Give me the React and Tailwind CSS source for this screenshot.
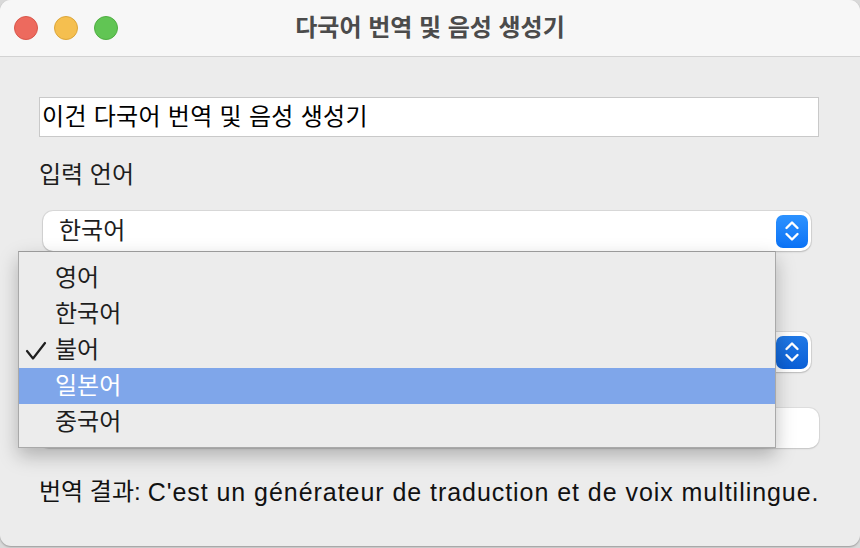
import React from "react";

const font = { fontFamily: '"Liberation Sans", "Noto Sans CJK KR", sans-serif' };

function Stepper({ dark }) {
  return (
    <div
      className={
        "w-[32px] h-[33px] rounded-[7px] flex items-center justify-center " +
        (dark
          ? "bg-gradient-to-b from-[#1f78e6] to-[#0a5fd6]"
          : "bg-gradient-to-b from-[#2c92ff] to-[#0a72f5]")
      }
    >
      <svg width="18" height="24" viewBox="0 0 18 24" fill="none" stroke="white" strokeWidth="2.4" strokeLinecap="round" strokeLinejoin="round">
        <polyline points="3.5,9 9,3.5 14.5,9" />
        <polyline points="3.5,15 9,20.5 14.5,15" />
      </svg>
    </div>
  );
}

function Select({ value, dark }) {
  return (
    <div className="ml-[4px] w-[768px] h-[40px] rounded-[10px] bg-white shadow-[0_0_0_1px_rgba(0,0,0,0.08),0_1px_2px_rgba(0,0,0,0.15)] flex items-center justify-between pl-[16px] pr-[3px]">
      <span className="text-[24px] leading-none text-[#1e1e1e]">{value}</span>
      <Stepper dark={dark} />
    </div>
  );
}

export default function App() {
  const items = ["영어", "한국어", "불어", "일본어", "중국어"];
  return (
    <div className="w-[860px] h-[548px] bg-[#d9d9d9] overflow-hidden" style={font}>
      <div className="relative w-[860px] h-[546px] rounded-[11px] bg-[#ececec] overflow-hidden shadow-[0_1px_2px_rgba(0,0,0,0.3)]">
        {/* Title bar */}
        <div className="h-[57px] bg-[#f7f7f7] border-b border-[#d3d3d3] flex items-center relative">
          <div className="flex gap-[16px] pl-[14px]">
            <div className="w-[24px] h-[24px] rounded-full bg-[#ed6a5e] border border-[#d9574b]" />
            <div className="w-[24px] h-[24px] rounded-full bg-[#f5bf4f] border border-[#dca63a]" />
            <div className="w-[24px] h-[24px] rounded-full bg-[#61c554] border border-[#4fae42]" />
          </div>
          <div className="absolute inset-0 flex items-center justify-center text-[24px] leading-none font-bold text-[#4b4b4b]">
            다국어 번역 및 음성 생성기
          </div>
        </div>

        {/* Content */}
        <div className="pl-[39px] pr-[41px] pt-[40px]">
          <div className="h-[40px] bg-white border border-[#c9c9c9] flex items-center pl-[2px] text-[24px] leading-none text-black tracking-[0.3px]">
            이건 다국어 번역 및 음성 생성기
          </div>
          <div className="mt-[23px] h-[30px] flex items-center text-[24px] leading-none text-[#1e1e1e]">입력 언어</div>
          <div className="mt-[21px]">
            <Select value="한국어" />
          </div>
          <div className="mt-[23px] h-[30px] flex items-center text-[24px] leading-none text-[#1e1e1e]">출력 언어</div>
          <div className="mt-[28px]">
            <Select value="불어" dark />
          </div>
          <div className="mt-[36px] h-[40px] rounded-[10px] bg-white shadow-[0_0_0_1px_rgba(0,0,0,0.06),0_1px_2px_rgba(0,0,0,0.12)]" />
          <div className="mt-[29px] h-[30px] flex items-center text-[24px] leading-none text-[#111] whitespace-nowrap">
            <span>번역 결과:</span>
            <span className="ml-[7px] text-[25px] tracking-[0.95px]">C'est un générateur de traduction et de voix multilingue.</span>
          </div>
        </div>

        {/* Dropdown menu */}
        <div className="absolute left-[18px] top-[251px] w-[758px] h-[197px] bg-[#ececec] border border-[#a9a9a9] border-t-[#9a9a9a] shadow-[0_8px_18px_rgba(0,0,0,0.25)] pt-[8px]">
          {items.map((it, i) => {
            const hi = i === 3;
            const checked = i === 2;
            return (
              <div
                key={it}
                className={"h-[36px] flex items-center relative " + (hi ? "bg-[#7fa6ea] text-white" : "text-[#1e1e1e]")}
              >
                {checked && (
                  <svg className="absolute left-[6px] top-[9px]" width="22" height="20" viewBox="0 0 22 20" fill="none" stroke="#1e1e1e" strokeWidth="2.2" strokeLinecap="round" strokeLinejoin="round">
                    <polyline points="2,10 8,17.5 20,2" />
                  </svg>
                )}
                <span className="pl-[36px] text-[24px] leading-none">{it}</span>
              </div>
            );
          })}
        </div>
      </div>
    </div>
  );
}
